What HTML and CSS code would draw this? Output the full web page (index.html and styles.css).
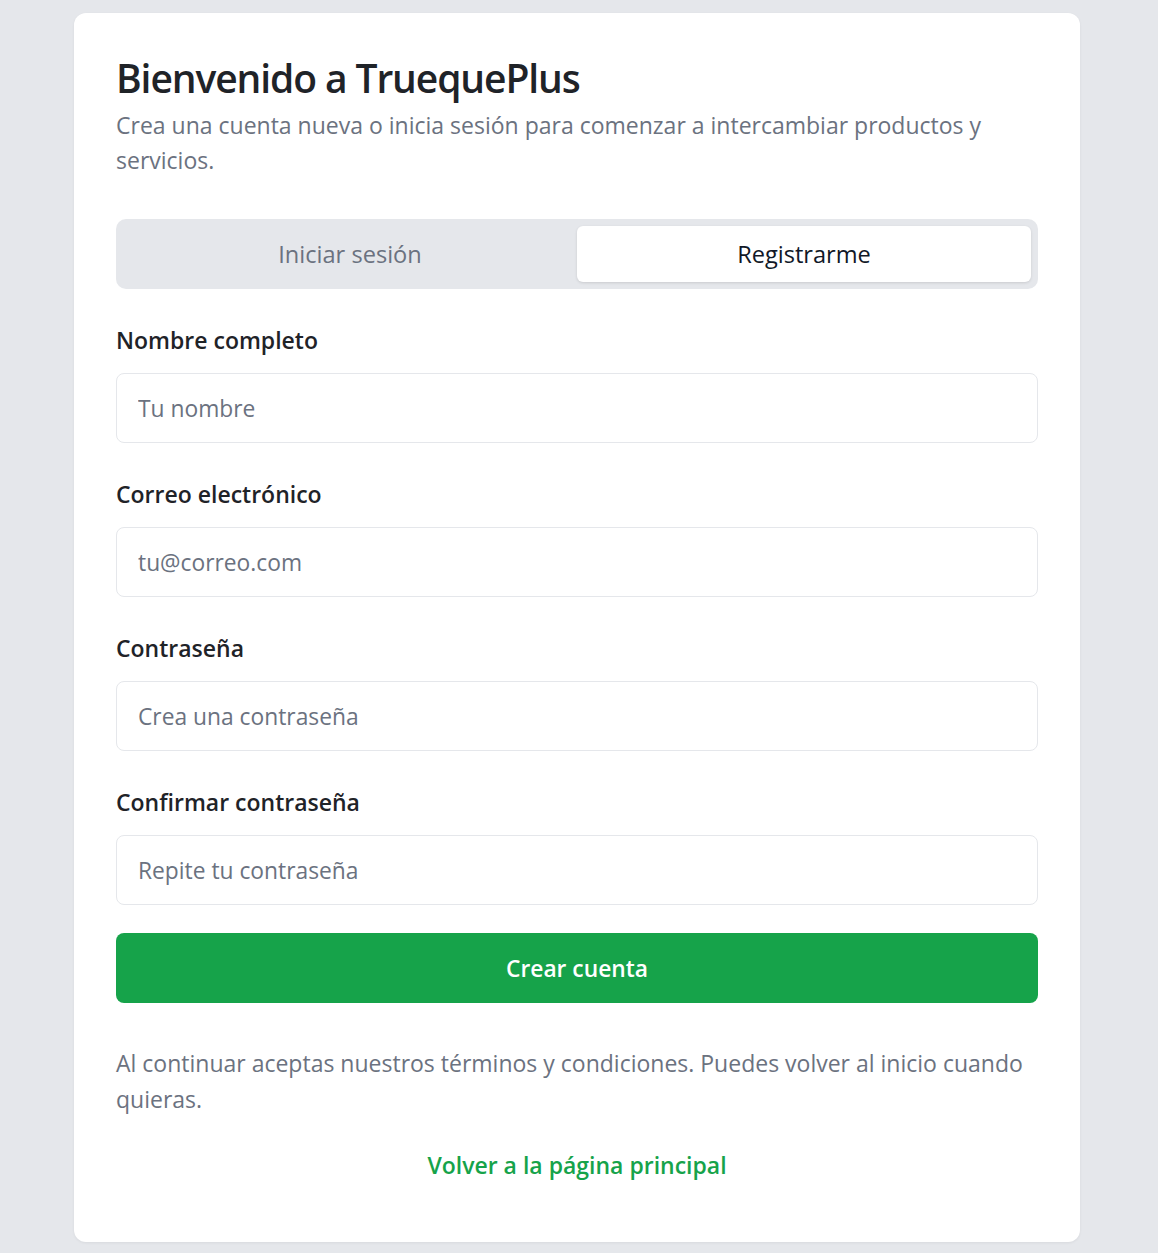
FILE: index.html
```html
<!DOCTYPE html>
<html lang="es">
<head>
<meta charset="utf-8">
<title>TruequePlus</title>
<link rel="stylesheet" href="styles.css">
</head>
<body>
<main class="card">
  <h1 class="title">Bienvenido a TruequePlus</h1>
  <p class="subtitle">Crea una cuenta nueva o inicia sesión para comenzar a intercambiar productos y servicios.</p>
  <div class="tabs">
    <button class="tab">Iniciar sesión</button>
    <button class="tab tab-active">Registrarme</button>
  </div>
  <form class="form">
    <div class="field">
      <label class="label">Nombre completo</label>
      <input class="input" type="text" placeholder="Tu nombre">
    </div>
    <div class="field">
      <label class="label">Correo electrónico</label>
      <input class="input" type="email" placeholder="tu@correo.com">
    </div>
    <div class="field">
      <label class="label">Contraseña</label>
      <input class="input" type="password" placeholder="Crea una contraseña">
    </div>
    <div class="field">
      <label class="label">Confirmar contraseña</label>
      <input class="input" type="password" placeholder="Repite tu contraseña">
    </div>
    <button class="submit" type="button">Crear cuenta</button>
  </form>
  <p class="note">Al continuar aceptas nuestros términos y condiciones. Puedes volver al inicio cuando quieras.</p>
  <div class="back"><a class="back-link" href="#">Volver a la página principal</a></div>
</main>
</body>
</html>
```
FILE: styles.css
```css
html, body {
  margin: 0;
  padding: 0;
  background: #e5e7eb;
  font-family: "Open Sans", "Noto Sans", sans-serif;
}
.card {
  box-sizing: border-box;
  width: 1006px;
  margin: 13px 0 12px 74px;
  background: #ffffff;
  border-radius: 12px;
  padding: 41px 42px 42px;
  box-shadow: 0 1px 3px rgba(0,0,0,0.06);
}
.title {
  margin: 0;
  font-size: 39px;
  line-height: 48px;
  font-weight: 600;
  color: #1f2328;
  letter-spacing: -1.1px;
}
.subtitle {
  margin: 6px 0 0;
  font-size: 23px;
  line-height: 35px;
  color: #6b7280;
}
.tabs {
  margin-top: 41px;
  display: grid;
  grid-template-columns: 1fr 1fr;
  gap: 0;
  padding: 7px;
  background: #e5e7eb;
  border-radius: 10px;
}
.tab {
  height: 56px;
  border: 0;
  border-radius: 6px;
  background: transparent;
  font-family: inherit;
  font-size: 23.6px;
  font-weight: 500;
  color: #6b7280;
}
.tab-active {
  background: #ffffff;
  color: #111827;
  box-shadow: 0 1px 3px rgba(0,0,0,0.12);
}
.form {
  display: flex;
  flex-direction: column;
}
.field {
  display: flex;
  flex-direction: column;
  gap: 17px;
  margin-top: 35px;
}
.label {
  font-size: 23px;
  line-height: 32px;
  font-weight: 600;
  color: #1f2328;
}
.input {
  box-sizing: border-box;
  height: 70px;
  border: 1px solid #e5e7eb;
  border-radius: 8px;
  padding: 0 21px;
  font-family: inherit;
  font-size: 22.8px;
  color: #111827;
}
.input::placeholder {
  color: #6b7280;
}
.submit {
  margin-top: 28px;
  height: 70px;
  border: 0;
  border-radius: 8px;
  background: #16a34a;
  color: #ffffff;
  font-family: inherit;
  font-size: 22.8px;
  font-weight: 600;
}
.note {
  margin: 42px 0 0;
  font-size: 23px;
  line-height: 36px;
  color: #6b7280;
}
.back {
  margin-top: 32px;
  margin-bottom: 16px;
  text-align: center;
  line-height: 32px;
}
.back-link {
  font-size: 23px;
  font-weight: 600;
  color: #16a34a;
  text-decoration: none;
}
```
